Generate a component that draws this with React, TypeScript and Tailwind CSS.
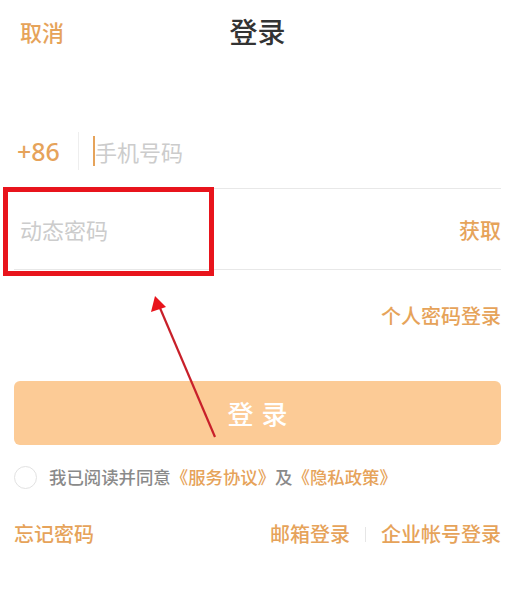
import React from "react";

const ORANGE = "text-[#e6a35a]";

export default function App() {
  return (
    <div className="relative w-[515px] h-[600px] bg-white overflow-hidden font-['Noto_Sans_CJK_SC','Noto_Sans',sans-serif]">
      {/* header */}
      <div className="relative h-[62px] flex items-center px-[20px]">
        <span className={`text-[22px] leading-none font-medium ${ORANGE}`}>取消</span>
        <span className="absolute left-1/2 -translate-x-1/2 text-[28px] leading-none font-medium text-[#333333]">
          登录
        </span>
      </div>

      <div className="px-[14px] pt-[52px]">
        {/* phone row */}
        <div className="h-[75px] flex items-center border-b border-[#e8e8e8]">
          <span className={`w-[50px] pl-[3px] text-[25px] leading-none font-medium font-['Noto_Sans',sans-serif] ${ORANGE}`}>
            +86
          </span>
          <span className="ml-[14px] w-px h-[38px] bg-[#eeeeee]" />
          <span className="ml-[14px] w-[2px] h-[30px] bg-[#e6a35a]" />
          <span className="text-[22px] leading-none text-[#cccccc]">手机号码</span>
        </div>

        {/* dynamic code row */}
        <div className="h-[81px] flex items-center justify-between border-b border-[#e8e8e8]">
          <span className="pl-[6px] text-[22px] leading-none text-[#cccccc]">动态密码</span>
          <span className={`text-[21px] leading-none font-medium ${ORANGE}`}>获取</span>
        </div>

        <div className="h-[111px] flex items-start justify-end pt-[36px]">
          <span className={`text-[20px] leading-none font-medium ${ORANGE}`}>个人密码登录</span>
        </div>

        {/* login button */}
        <button className="w-full h-[64px] rounded-[6px] bg-[#fccb96] flex items-center justify-center">
          <span className="text-[26px] leading-none font-medium text-white tracking-[8px] pl-[8px]">登录</span>
        </button>

        {/* agreement */}
        <div className="mt-[20px] flex items-center h-[24px]">
          <span className="w-[23px] h-[23px] rounded-full border border-[#e2e2e2]" />
          <span className="ml-[12px] text-[17.4px] leading-none font-medium text-[#8a8a8a] whitespace-nowrap">
            我已阅读并同意
            <span className={ORANGE}>《服务协议》</span>
            及
            <span className={ORANGE}>《隐私政策》</span>
          </span>
        </div>

        {/* footer links */}
        <div className="mt-[35px] flex items-center justify-between">
          <span className={`text-[20px] leading-none font-medium ${ORANGE}`}>忘记密码</span>
          <div className="flex items-center">
            <span className={`text-[20px] leading-none font-medium ${ORANGE}`}>邮箱登录</span>
            <span className="mx-[15px] w-px h-[15px] bg-[#e6e6e6]" />
            <span className={`text-[20px] leading-none font-medium ${ORANGE}`}>企业帐号登录</span>
          </div>
        </div>
      </div>

      {/* annotation overlay */}
      <div className="absolute left-[3px] top-[187px] w-[211px] h-[89px] border-[5px] border-[#e8141c]" />
      <svg className="absolute left-0 top-0" width="515" height="600" viewBox="0 0 515 600">
        <line x1="215" y1="437" x2="160" y2="308" stroke="#c8202a" strokeWidth="2.2" />
        <polygon points="155,296 151,312 166,307" fill="#e8141c" />
      </svg>
    </div>
  );
}
